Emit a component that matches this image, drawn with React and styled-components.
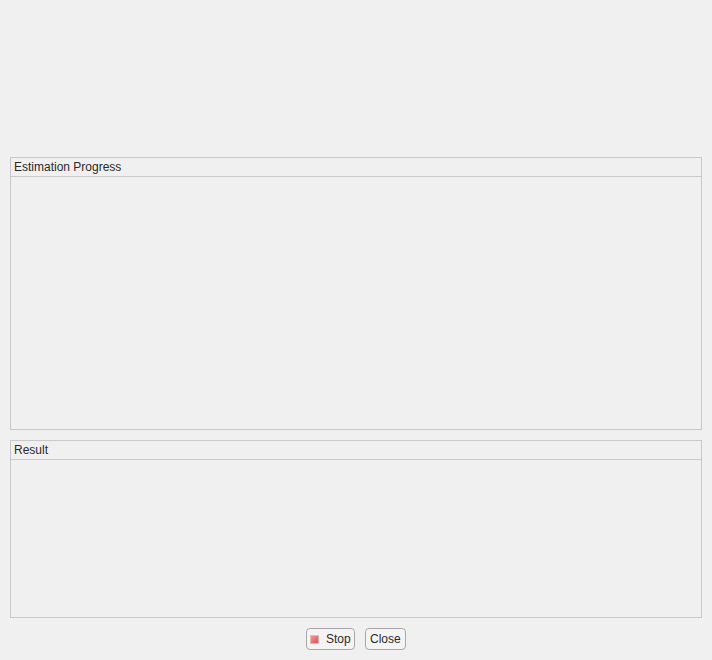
import styled, { createGlobalStyle } from "styled-components";

const GlobalStyle = createGlobalStyle`
  html, body {
    margin: 0;
    padding: 0;
    background: #f0f0f0;
  }
`;

const Dialog = styled.div`
  box-sizing: border-box;
  width: 712px;
  height: 660px;
  padding: 157px 10px 0;
  display: flex;
  flex-direction: column;
  font-family: "Liberation Sans", Arial, sans-serif;
  font-size: 12px;
  color: #2a2a2a;
  background: #f0f0f0;
`;

const Panel = styled.section`
  box-sizing: border-box;
  height: ${(p) => p.$height}px;
  margin-bottom: 10px;
  border: 1px solid #c8c8c8;
`;

const PanelTitle = styled.div`
  box-sizing: border-box;
  height: 19px;
  padding-left: 3px;
  line-height: 18px;
  border-bottom: 1px solid #c8c8c8;
`;

const ButtonBar = styled.div`
  display: flex;
  justify-content: center;
  gap: 10px;
`;

const Button = styled.button`
  box-sizing: border-box;
  width: ${(p) => p.$width}px;
  height: 22px;
  padding: 0 0 0 4px;
  display: flex;
  align-items: center;
  gap: 6px;
  font: inherit;
  color: inherit;
  background: #f4f4f4;
  border: 1px solid #a8a8a8;
  border-radius: 4px;
`;

const StopIcon = styled.span`
  box-sizing: border-box;
  width: 9px;
  height: 9px;
  margin-top: 1px;
  margin-left: -1px;
  margin-right: 1px;
  background: linear-gradient(135deg, #f29a9a, #e84a4a);
  border: 1px solid #e8b4b4;
`;

export default function App() {
  return (
    <>
      <GlobalStyle />
      <Dialog>
        <Panel $height={273}>
          <PanelTitle>Estimation Progress</PanelTitle>
        </Panel>
        <Panel $height={178}>
          <PanelTitle>Result</PanelTitle>
        </Panel>
        <ButtonBar>
          <Button $width={49}>
            <StopIcon />
            Stop
          </Button>
          <Button $width={41}>Close</Button>
        </ButtonBar>
      </Dialog>
    </>
  );
}
